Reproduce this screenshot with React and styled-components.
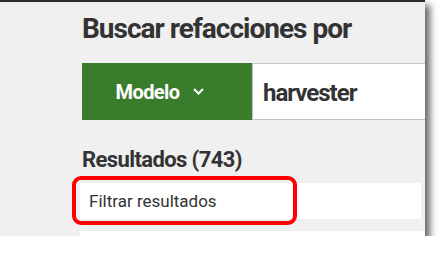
import styled, { createGlobalStyle } from 'styled-components';

const GlobalStyle = createGlobalStyle`
  body {
    margin: 0;
    background: #ffffff;
    font-family: Roboto, "Liberation Sans", sans-serif;
  }
`;

const Shot = styled.div`
  width: 425px;
  height: 236px;
  box-sizing: border-box;
  background: #f0f0f0;
  border-top: 2px solid #2b2b2b;
  box-shadow: 5px 5px 7px rgba(0, 0, 0, 0.6);
  overflow: hidden;
`;

const Content = styled.div`
  padding-left: 82px;
  display: flex;
  flex-direction: column;
`;

const Title = styled.h1`
  margin: 12px 0 0;
  font-size: 28px;
  line-height: 30px;
  font-weight: 700;
  letter-spacing: -1px;
  color: #333333;
  white-space: nowrap;
`;

const SearchRow = styled.div`
  display: flex;
  height: 57px;
  margin-top: 19px;
`;

const ModelButton = styled.button`
  flex: 0 0 170px;
  display: flex;
  align-items: center;
  justify-content: center;
  gap: 14px;
  border: none;
  padding: 0 14px 0 0;
  background: #387c2c;
  color: #ffffff;
  font-family: Roboto, "Liberation Sans", sans-serif;
  font-size: 20px;
  font-weight: 700;
  letter-spacing: -0.6px;
`;

const SearchField = styled.div`
  flex: 1;
  display: flex;
  align-items: center;
  box-sizing: border-box;
  padding: 2px 0 0 10px;
  background: #ffffff;
  border: 1px solid #c4c4c4;
  border-right: none;
  font-size: 24px;
  font-weight: 700;
  letter-spacing: -1px;
  color: #333333;
`;

const Results = styled.h2`
  margin: 27px 0 0;
  font-size: 22px;
  line-height: 26px;
  font-weight: 700;
  letter-spacing: -0.6px;
  color: #333333;
`;

const FilterBox = styled.div`
  position: relative;
  height: 36px;
  margin: 10px 4px 0 -2px;
  padding-left: 9px;
  display: flex;
  align-items: center;
  background: #ffffff;
  font-size: 17px;
  color: #333333;
`;

const Highlight = styled.div`
  position: absolute;
  left: -8px;
  top: -7px;
  width: 225px;
  height: 49px;
  box-sizing: border-box;
  border: 4px solid #ff0000;
  border-radius: 9px;
`;

const ListItem = styled.div`
  height: 12px;
  margin: 12px 0 0 -2px;
  background: #ffffff;
`;

const Chevron = () => (
  <svg width="11" height="7" viewBox="0 0 11 7" fill="none">
    <path d="M1 1l4.5 4.5L10 1" stroke="#ffffff" strokeWidth="2" />
  </svg>
);

export default function App() {
  return (
    <>
      <GlobalStyle />
      <Shot>
        <Content>
          <Title>Buscar refacciones por</Title>
          <SearchRow>
            <ModelButton>
              Modelo
              <Chevron />
            </ModelButton>
            <SearchField>harvester</SearchField>
          </SearchRow>
          <Results>Resultados (743)</Results>
          <FilterBox>
            Filtrar resultados
            <Highlight />
          </FilterBox>
          <ListItem />
        </Content>
      </Shot>
    </>
  );
}
